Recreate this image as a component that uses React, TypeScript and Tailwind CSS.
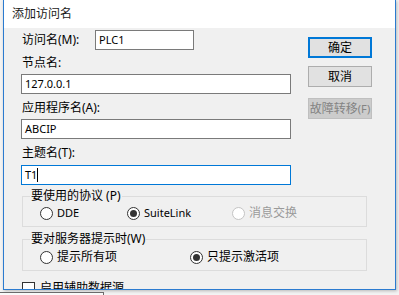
import React from "react";

const font = { fontFamily: '"Noto Sans", "Noto Sans CJK SC", sans-serif' };

function Radio({ label, checked, disabled, latin }: { label: string; checked?: boolean; disabled?: boolean; latin?: boolean }) {
  return (
    <div className="flex items-center">
      <span
        className={`w-[13px] h-[13px] rounded-full border bg-white flex items-center justify-center ${
          disabled ? "border-[#c4c4c4]" : "border-[#333333]"
        }`}
      >
        {checked && <span className="w-[7px] h-[7px] rounded-full bg-[#333333]" />}
      </span>
      <span
        className={`ml-[4px] leading-[14px] ${latin ? "text-[11px]" : ""} ${
          disabled ? "text-[#9a9a9a]" : "text-black"
        }`}
      >
        {label}
      </span>
    </div>
  );
}

function Input({ value, focused, className }: { value: string; focused?: boolean; className?: string }) {
  return (
    <div
      className={`h-[20px] bg-white border flex items-center pl-[3px] text-[11px] ${
        focused ? "border-[#0078d7]" : "border-[#7a7a7a]"
      } ${className ?? ""}`}
    >
      <span className="leading-[14px]">{value}</span>
      {focused && <span className="w-px h-[14px] bg-black" />}
    </div>
  );
}

export default function App() {
  return (
    <div className="w-[399px] h-[295px] bg-[#f3f3f3] overflow-hidden text-[12px] text-black" style={font}>
      <div className="ml-[3px] w-[393px] h-[290px] border-x border-b border-[#2b7bd0] flex flex-col overflow-hidden shadow-[1px_1px_3px_rgba(0,0,0,0.25)]">
        {/* title bar */}
        <div className="h-[28px] shrink-0 bg-white flex items-center pl-[8px] text-[12px] text-[#1a1a1a]">添加访问名</div>

        {/* body */}
        <div className="flex-1 min-h-0 bg-[#f0f0f0] flex items-start pl-[17px]">
          <div className="w-[270px] flex flex-col">
            <div className="mt-[2px] flex items-center h-[20px]">
              <span className="w-[74px] pl-[1px]">访问名(M):</span>
              <Input value="PLC1" className="w-[99px]" />
            </div>
            <div className="h-[24px] flex items-center pl-[1px] pt-[1px]">节点名:</div>
            <Input value="127.0.0.1" />
            <div className="h-[25px] flex items-center pl-[1px] pt-[3px]">应用程序名(A):</div>
            <Input value="ABCIP" />
            <div className="h-[26px] flex items-center pl-[1px] pt-[1px]">主题名(T):</div>
            <Input value="T1" focused />

            <fieldset className="mt-[4px] ml-[1px] w-[345px] h-[38px] border border-[#dcdcdc] px-[17px] pt-[3px]">
              <legend className="ml-[-10px] px-[1px] leading-[14px]">要使用的协议 (P)</legend>
              <div className="flex">
                <div className="w-[87px]"><Radio label="DDE" latin /></div>
                <div className="w-[105px]"><Radio label="SuiteLink" checked latin /></div>
                <Radio label="消息交换" disabled />
              </div>
            </fieldset>

            <fieldset className="mt-[5px] ml-[1px] w-[345px] h-[39px] border border-[#dcdcdc] px-[17px] pt-[4px]">
              <legend className="ml-[-10px] px-[1px] leading-[14px]">要对服务器提示时(W)</legend>
              <div className="flex">
                <div className="w-[150px]"><Radio label="提示所有项" /></div>
                <Radio label="只提示激活项" checked />
              </div>
            </fieldset>

            <div className="mt-[10px] ml-[1px] flex items-center">
              <span className="w-[13px] h-[13px] border border-[#333333] bg-white" />
              <span className="ml-[5px] leading-[14px]">启用辅助数据源</span>
            </div>
          </div>

          <div className="ml-[17px] w-[64px] flex flex-col pt-[9px]">
            <button className="h-[21px] bg-[#e1e1e1] border-2 border-[#0078d7] leading-[14px]">确定</button>
            <button className="mt-[8px] h-[21px] bg-[#e1e1e1] border border-[#adadad] leading-[14px]">取消</button>
            <button className="mt-[11px] h-[21px] px-0 bg-[#cccccc] border border-[#bfbfbf] text-[#838383] leading-[14px] whitespace-nowrap flex items-center justify-center">
              故障转移<span className="text-[11px]">(F)</span>
            </button>
          </div>
        </div>
      </div>
      <div className="mt-[2px] w-[104px] h-[3px] border-t border-r border-[#6b6b6b] bg-[#fafafa]" />
    </div>
  );
}
